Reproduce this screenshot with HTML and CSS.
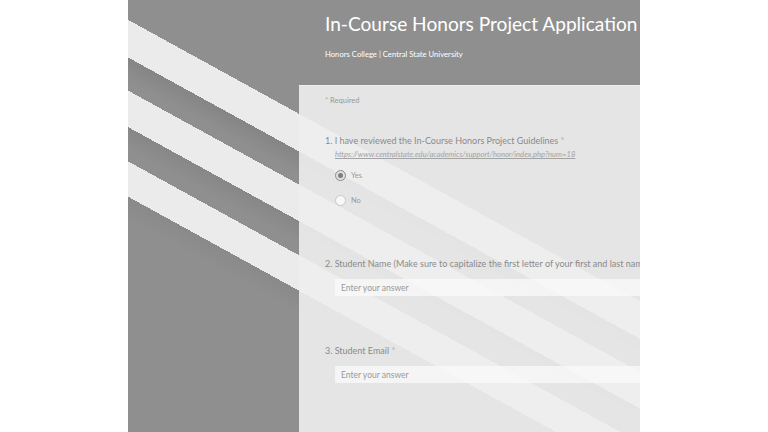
FILE: index.html
```html
<!DOCTYPE html>
<html lang="en">
<head>
  <meta charset="UTF-8" />
  <title>In-Course Honors Project Application</title>
  <meta name="viewport" content="width=device-width, initial-scale=1" />
  <link rel="stylesheet" href="styles.css">
</head>
<body>
  <div class="stage">
    <header class="banner">
      <h1>In-Course Honors Project Application</h1>
      <p>Honors College | Central State University</p>
    </header>

    <form class="card">
      <p class="required"><span class="star">*</span> Required</p>

      <div class="question q-first">
        <div class="q-title">1. I have reviewed the In-Course Honors Project Guidelines <span class="star">*</span></div>
        <a class="q-link" href="#">https://www.centralstate.edu/academics/support/honor/index.php?num=18</a>
        <div class="options">
          <label class="option"><span class="radio checked"></span>Yes</label>
          <label class="option"><span class="radio"></span>No</label>
        </div>
      </div>

      <div class="question q-name">
        <div class="q-title">2. Student Name (Make sure to capitalize the first letter of your first and last name)</div>
        <input class="answer" placeholder="Enter your answer" />
      </div>

      <div class="question q-email">
        <div class="q-title">3. Student Email <span class="star">*</span></div>
        <input class="answer" placeholder="Enter your answer" />
      </div>
    </form>
  </div>
</body>
</html>
```

FILE: styles.css
```css
body {
  margin: 0;
  background: #fff;
  font-family: Lato, "Open Sans", sans-serif;
}

.stage {
  width: 512px;
  height: 432px;
  margin: 0 auto;
  overflow: hidden;
  background:
    linear-gradient(208.8deg,
      transparent 0px, transparent 264px,
      #ebebeb 264px, #ebebeb 297px,
      rgba(0, 0, 0, 0.07) 297px, transparent 318px,
      transparent 326px,
      #ebebeb 326px, #ebebeb 358px,
      rgba(0, 0, 0, 0.06) 358px, transparent 378px,
      transparent 388px,
      #ebebeb 388px, #ebebeb 419px,
      rgba(0, 0, 0, 0.04) 419px, transparent 440px),
    #8f8f8f;
}

.banner {
  padding: 12px 0 0 197px;
  color: #fff;
}

.banner h1 {
  margin: 0;
  font-size: 19.1px;
  line-height: 24px;
  font-weight: 400;
  white-space: nowrap;
}

.banner p {
  margin: 12px 0 0;
  font-size: 7.7px;
  line-height: 12px;
}

.card {
  margin: 25px 0 0 171px;
  width: 420px;
  height: 400px;
  padding: 9px 0 0 26px;
  box-sizing: border-box;
  background: rgba(238, 238, 238, 0.9);
  border-top: 1px solid rgba(255, 255, 255, 0.4);
  color: #8a8a8a;
}

.required {
  margin: 0;
  font-size: 7.5px;
  line-height: 12px;
  color: #999;
}

.star {
  color: #b0b0b0;
}

.question {
  display: flex;
  flex-direction: column;
  align-items: flex-start;
}

.q-first { margin-top: 27px; }
.q-name { margin-top: 50px; }
.q-email { margin-top: 48px; }

.q-title {
  font-size: 9px;
  line-height: 14px;
  white-space: nowrap;
}

.q-link {
  margin-left: 10px;
  font-size: 7.6px;
  line-height: 12px;
  font-style: italic;
  color: #a3a3a3;
}

.options {
  display: flex;
  flex-direction: column;
  gap: 11px;
  margin: 8px 0 0 10px;
}

.option {
  display: flex;
  align-items: center;
  gap: 5px;
  height: 14px;
  font-size: 7.5px;
  color: #999;
}

.radio {
  width: 9px;
  height: 9px;
  border: 1px solid #c8c8c8;
  border-radius: 50%;
  background: #f8f8f8;
  display: flex;
  align-items: center;
  justify-content: center;
}

.radio.checked {
  border-color: #8c8c8c;
  background: #e0e0e0;
}

.radio.checked::after {
  content: "";
  width: 5px;
  height: 5px;
  border-radius: 50%;
  background: #7d7d7d;
}

.answer {
  margin: 8px 0 0 10px;
  width: 340px;
  height: 17px;
  padding: 0 6px;
  border: none;
  background: rgba(250, 250, 250, 0.75);
  font-family: inherit;
  font-size: 8.5px;
  color: #777;
}

.answer::placeholder {
  color: #999;
}
```
